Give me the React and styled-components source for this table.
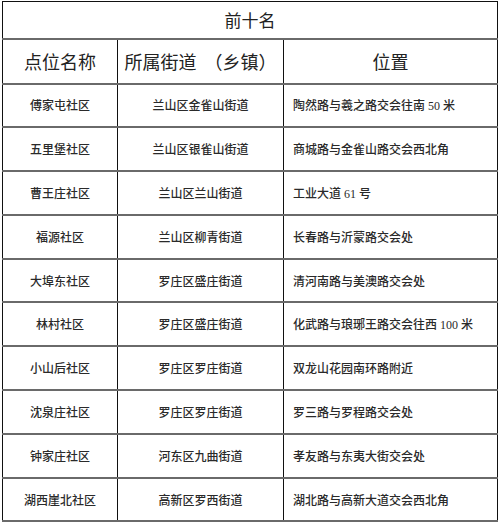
import React from "react";
import styled, { createGlobalStyle } from "styled-components";

const rows = [
  ["傅家屯社区", "兰山区金雀山街道", "陶然路与羲之路交会往南 50 米"],
  ["五里堡社区", "兰山区银雀山街道", "商城路与金雀山路交会西北角"],
  ["曹王庄社区", "兰山区兰山街道", "工业大道 61 号"],
  ["福源社区", "兰山区柳青街道", "长春路与沂蒙路交会处"],
  ["大埠东社区", "罗庄区盛庄街道", "清河南路与美澳路交会处"],
  ["林村社区", "罗庄区盛庄街道", "化武路与琅琊王路交会往西 100 米"],
  ["小山后社区", "罗庄区罗庄街道", "双龙山花园南环路附近"],
  ["沈泉庄社区", "罗庄区罗庄街道", "罗三路与罗程路交会处"],
  ["钟家庄社区", "河东区九曲街道", "孝友路与东夷大街交会处"],
  ["湖西崖北社区", "高新区罗西街道", "湖北路与高新大道交会西北角"],
];

const App = () => {
  return (
    <>
      <GlobalStyle />
      <Page>
        <Table>
          <colgroup>
            <col style={{ width: 115 }} />
            <col style={{ width: 166 }} />
            <col style={{ width: 214 }} />
          </colgroup>
          <tbody>
            <TitleRow>
              <TitleCell colSpan={3}>前十名</TitleCell>
            </TitleRow>
            <HeadRow>
              <HeadCell>点位名称</HeadCell>
              <HeadCell>所属街道&nbsp;&nbsp;（乡镇）</HeadCell>
              <HeadCell>位置</HeadCell>
            </HeadRow>
            {rows.map(([name, street, place]) => (
              <DataRow key={name}>
                <DataCell>{name}</DataCell>
                <DataCell>{street}</DataCell>
                <DataCell $left>{place}</DataCell>
              </DataRow>
            ))}
          </tbody>
        </Table>
      </Page>
    </>
  );
};

export default App;

// Styled Components
const GlobalStyle = createGlobalStyle`
  body {
    margin: 0;
    background: #fff;
  }
`;

const Page = styled.div`
  padding: 1px 2px;
`;

const Table = styled.table`
  width: 495px;
  border-collapse: collapse;
  table-layout: fixed;
  border: 1px solid #111;
`;

const Cell = styled.td`
  border-left: 1px solid #111;
  border-right: 1px solid #111;
  border-top: 2px solid #6a6a6a;
  border-bottom: 2px solid #6a6a6a;
  padding: 0;
  text-align: center;
  vertical-align: middle;
`;

const TitleRow = styled.tr`
  height: 37px;
`;

const TitleCell = styled(Cell)`
  border-top: 1px solid #111;
  font-family: "Noto Sans CJK SC", sans-serif;
  font-size: 17px;
  color: #222;
`;

const HeadRow = styled.tr`
  height: 45px;
`;

const HeadCell = styled(Cell)`
  font-family: "Noto Sans CJK SC", sans-serif;
  font-size: 18px;
  color: #222;
  white-space: nowrap;
`;

const DataRow = styled.tr`
  height: 43.8px;
`;

const DataCell = styled(Cell)`
  font-family: "Liberation Serif", "Noto Sans CJK SC", serif;
  font-size: 12px;
  font-weight: 500;
  color: #2a2a2a;
  white-space: nowrap;
  text-align: ${(p) => (p.$left ? "left" : "center")};
  padding-left: ${(p) => (p.$left ? "9px" : "0")};
`;
